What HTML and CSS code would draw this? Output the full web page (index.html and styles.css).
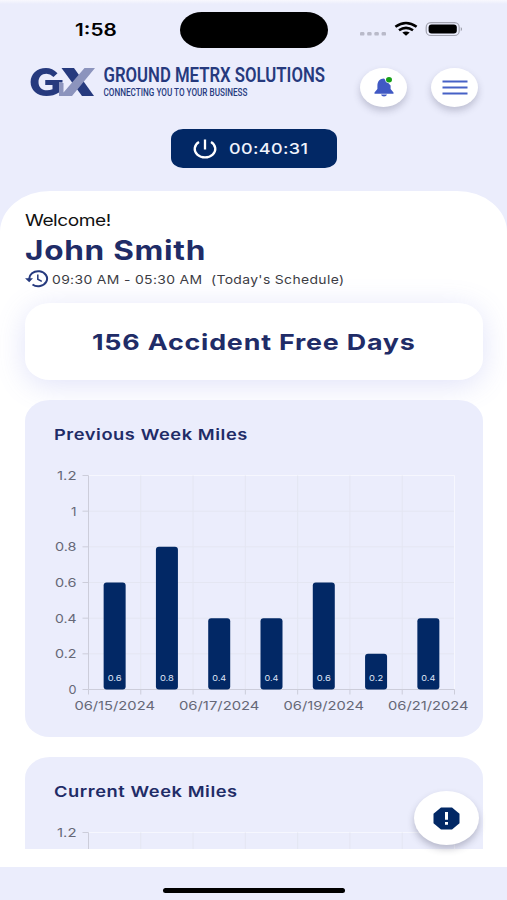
FILE: index.html
```html
<!DOCTYPE html>
<html lang="en">

<head>
  <meta charset="UTF-8">
  <meta name="viewport" content="width=device-width, initial-scale=1.0">
  <title>Ground Metrx Solutions</title>
  <link rel="stylesheet" href="styles.css">
</head>

<body>

  <div class="status-bar">
    <div class="clock"><span class="wide">1:58</span></div>
    <div class="island"></div>
    <svg class="status-icons" width="106" height="18" viewBox="0 0 106 18">
      <g fill="#b9bac9">
        <rect x="1" y="12" width="4.4" height="3.6" rx="1.2" />
        <rect x="8.2" y="12" width="4.4" height="3.6" rx="1.2" />
        <rect x="15.4" y="12" width="4.4" height="3.6" rx="1.2" />
        <rect x="22.6" y="12" width="4.4" height="3.6" rx="1.2" />
      </g>
      <g fill="none" stroke="#000" stroke-width="2.6">
        <path d="M36.400 6.800Q47 -.8 57.600 6.800" />
        <path d="M40 10.300Q47 5.300 54 10.300" />
      </g>
      <path d="M43.300 12.600Q47 10.400 50.700 12.600L47 15.800Z" fill="#000" />
      <rect x="67.200" y="2.700" width="33" height="12.800" rx="4.600" fill="none" stroke="#a3a4b0" stroke-width="1.200" />
      <rect x="69.600" y="4.600" width="28.200" height="9" rx="3" fill="#000" />
      <path d="M101.800 7Q104 9.100 101.800 11.200Z" fill="#8d8e99" />
    </svg>
  </div>

  <header class="header">
    <svg class="logo" width="300" height="40" viewBox="0 -2 300 40">
      <path d="M31.500 4H44L64 32H52Z" fill="#263a7e" />
      <path d="M27.500 9.200Q22.500 4 16 4C7 4 .6 10 .6 18S7 32 16.500 32Q23.500 32 29 28.500V16H15.500V21H22.500V25.300Q20 26.300 17 26.300C11.500 26.300 8.500 23 8.500 18S11.500 9.700 16.500 9.700Q20 9.700 23.500 13Z" fill="#263a7e" />
      <path d="M15.500 16H32.500V18.500H29V21H15.500Z" fill="#263a7e" />
      <path d="M29 19H33.500V28.500L54.500 4H65L42 32H29Z" fill="#8c94bd" />
      <text class="logo-name" x="73.500" y="17.500" textLength="221.500" lengthAdjust="spacingAndGlyphs">GROUND METRX SOLUTIONS</text>
      <text class="logo-tagline" x="73.500" y="32" textLength="144" lengthAdjust="spacingAndGlyphs">CONNECTING YOU TO YOUR BUSINESS</text>
    </svg>
    <button class="round-button">
      <svg width="22" height="22" viewBox="0 0 22 22">
        <path d="M11 2.500C6.500 2.500 4.600 5.500 4.400 9.500V13L1.500 16.500V17.800H20.500V16.500L17.600 13V9.500Z" fill="#4059c4" />
        <path d="M8 18.600H14Q13.500 20.600 11 20.600T8 18.600Z" fill="#4059c4" />
        <ellipse cx="16" cy="3.800" rx="3.700" ry="3.300" fill="#fff" />
        <ellipse cx="16" cy="3.800" rx="3" ry="2.700" fill="#18a018" />
      </svg>
    </button>
    <button class="round-button">
      <svg width="26" height="15" viewBox="0 0 26 15">
        <path d="M.5 1.500H25.500M.5 7.500H25.500M.5 13.500H25.500" stroke="#4661c6" stroke-width="2" />
      </svg>
    </button>
  </header>

  <div class="timer-row">
    <button class="timer">
      <svg width="24" height="20" viewBox="0 0 24 20">
        <path d="M6 3A10.300 8.500 0 1 0 18 3M12 .5V10.500" fill="none" stroke="#fff" stroke-width="2.300" />
      </svg>
      <span class="wide">00:40:31</span>
    </button>
  </div>

  <main class="panel">
    <div class="scroll">
      <div class="welcome"><span class="wide">Welcome!</span></div>
      <h1 class="name"><span class="wide">John Smith</span></h1>
      <div class="schedule">
        <svg width="24" height="18" viewBox="0 0 24 18">
          <path d="M4.300 9.500A8.900 7.500 0 1 1 7.500 14.500" fill="none" stroke="#263a7e" stroke-width="2" />
          <path d="M0 8.200H8L4.200 12.200Z" fill="#263a7e" />
          <path d="M12.800 4.500V9.200L16.800 11.400" fill="none" stroke="#263a7e" stroke-width="1.500" />
        </svg>
        <span class="wide">09:30 AM - 05:30 AM&nbsp; (Today's Schedule)</span>
      </div>

      <section class="accident-card"><span class="wide">156 Accident Free Days</span></section>

      <section class="chart-card">
        <h2><span class="wide">Previous Week Miles</span></h2>
        <svg class="chart" id="previousWeek" width="458" height="250"></svg>
      </section>

      <section class="chart-card">
        <h2><span class="wide">Current Week Miles</span></h2>
        <svg class="chart" id="currentWeek" width="458" height="24"></svg>
      </section>
    </div>
  </main>

  <footer class="home-area">
    <div class="home-indicator"></div>
  </footer>

  <button class="alert-button">
    <svg width="27" height="23" viewBox="0 0 27 23">
      <path d="M8 .5H19L26.500 6.800V16.200L19 22.500H8L.5 16.200V6.800Z" fill="#022865" />
      <path d="M13.500 5V12.700M13.500 15V17.800" stroke="#fff" stroke-width="3" />
    </svg>
  </button>

  <script>
    const previousMiles = [
      { date: "06/15/2024", value: 0.6 },
      { date: "06/16/2024", value: 0.8 },
      { date: "06/17/2024", value: 0.4 },
      { date: "06/18/2024", value: 0.4 },
      { date: "06/19/2024", value: 0.6 },
      { date: "06/20/2024", value: 0.2 },
      { date: "06/21/2024", value: 0.4 }
    ];

    const days = 7;
    const left = 63.5, right = 429.5, top0 = 7.5, bottom = 221.5;
    const maxValue = 1.2;

    function text(x, y, width, anchor, cls, label) {
      return `<text class="${cls}" x="${x}" y="${y}" text-anchor="${anchor}" textLength="${width}" lengthAdjust="spacingAndGlyphs">${label}</text>`;
    }

    function line(x1, y1, x2, y2, cls) {
      return `<line class="${cls}" x1="${x1}" y1="${y1}" x2="${x2}" y2="${y2}" />`;
    }

    function renderChart(id, data) {
      const chart = document.getElementById(id);
      const height = Number(chart.getAttribute("height"));
      const step = (right - left) / days;
      let out = "";

      // grid and value axis, only as far down as the chart is open
      for (let i = 0; i <= 6; i++) {
        const y = bottom - (bottom - top0) * i / 6;
        if (y > height) continue;
        const label = String(+(i * 0.2).toFixed(1));
        const width = label === "1.2" ? 19.5 : label === "0" ? 8 : label === "1" ? 5.5 : 21.5;
        out += line(left, y, right, y, i === 6 ? "grid-edge" : "grid");
        out += line(left - 6, y, left, y, "axis");
        out += text(51.5, y + 4.4, width, "end", "label", label);
      }
      for (let i = 0; i <= days; i++) {
        const x = left + step * i;
        out += line(x, top0, x, bottom, i === days ? "grid-edge" : "grid");
        out += line(x, bottom, x, bottom + 5, "axis");
      }
      out += line(left, top0, left, bottom, "axis");
      out += line(left, bottom, right, bottom, "axis");

      data.forEach((d, i) => {
        const x = left + step * (i + 0.5);
        const h = (bottom - top0) * d.value / maxValue;
        out += `<rect class="bar" x="${x - 11}" y="${bottom - h}" width="22" height="${h}" rx="3" />`;
        out += text(x, bottom - 9, 14, "middle", "bar-label", d.value);
        if (i % 2 === 0) {
          out += text(x, bottom + 20.2, 80.5, "middle", "label", d.date);
        }
      });

      chart.innerHTML = out;
    }

    renderChart("previousWeek", previousMiles);
    renderChart("currentWeek", []);
  </script>

</body>

</html>
```
FILE: styles.css
```css
* {
  box-sizing: border-box;
}

body {
  margin: 0;
  height: 900px;
  display: flex;
  flex-direction: column;
  overflow: hidden;
  background: linear-gradient(#f8f8fe 0, #ebedfc 4px);
  font-family: Inter, "Liberation Sans", sans-serif;
  color: #1f2c67;
}

button {
  border: none;
  padding: 0;
  display: flex;
  align-items: center;
  justify-content: center;
  font-family: inherit;
}

h1,
h2 {
  margin: 0;
}

/* letters are drawn wider than tall all over the app */
.wide {
  display: inline-block;
  white-space: nowrap;
  transform: scaleX(1.22);
  transform-origin: left center;
}

.status-bar {
  height: 60px;
  flex: none;
  display: grid;
  grid-template-columns: 180px 148px 1fr;
  align-items: center;
}

.clock {
  padding-left: 75px;
  color: #000;
  font-size: 17px;
  font-weight: 600;
}

.island {
  height: 36px;
  border-radius: 22px / 18px;
  background: #000;
}

.status-icons {
  margin: -2px 0 0 31px;
}

.header {
  height: 54px;
  flex: none;
  display: flex;
  align-items: center;
  padding: 0 29px 0 30px;
}

.logo {
  flex: none;
  margin-top: -10px;
}

.logo-name,
.logo-tagline {
  font-family: Roboto, "Liberation Sans", sans-serif;
  fill: #263a7e;
}

.logo-name {
  font-size: 19.5px;
  font-weight: 600;
}

.logo-tagline {
  font-size: 10px;
  font-weight: 500;
}

.round-button {
  flex: none;
  width: 47px;
  height: 39px;
  border-radius: 50%;
  background: #fff;
  box-shadow: 0 4px 7px rgba(60, 60, 90, 0.25);
}

.header .logo + .round-button {
  margin-left: 30px;
}

.round-button + .round-button {
  margin-left: 24px;
}

.timer-row {
  height: 77px;
  flex: none;
  padding: 15px 0 0 171px;
}

.timer {
  width: 166px;
  height: 39px;
  border-radius: 12px / 10px;
  background: #022865;
  color: #f0f3fc;
  font-size: 15px;
  font-weight: 500;
  letter-spacing: 0.3px;
  justify-content: flex-start;
  padding-left: 22px;
  gap: 12px;
}

.timer .wide {
  transform: scaleX(1.2);
}

.panel {
  height: 676px;
  flex: none;
  background: #fff;
  border-radius: 50px 50px 0 0 / 41px 41px 0 0;
}

.scroll {
  height: 658px;
  overflow: hidden;
  padding: 18px 24px 0 25px;
}

.welcome {
  height: 23px;
  line-height: 23px;
  color: #111;
  font-size: 16.5px;
  letter-spacing: -0.4px;
}

.welcome .wide,
.schedule .wide {
  transform: scaleX(1.16);
}

.name {
  height: 36px;
  line-height: 38px;
  font-size: 27px;
  font-weight: 650;
  letter-spacing: 0.6px;
}

.name .wide {
  transform: scaleX(1.17);
}

.schedule {
  height: 22px;
  display: flex;
  align-items: center;
  gap: 3px;
  color: #3c3c44;
  font-size: 12px;
  letter-spacing: 0.3px;
}

.accident-card {
  height: 77px;
  margin-top: 13px;
  padding-left: 67px;
  line-height: 78px;
  border-radius: 25px / 21px;
  background: #fff;
  box-shadow: 0 5px 30px rgba(100, 108, 225, 0.2);
  font-size: 22px;
  font-weight: 650;
  letter-spacing: 0.65px;
}

.chart-card {
  position: relative;
  height: 337px;
  margin-top: 20px;
  padding-top: 25px;
  border-radius: 25px / 21px;
  background: #ebedfc;
}

.chart-card h2 {
  height: 20px;
  line-height: 20px;
  padding-left: 29px;
  font-size: 15px;
  font-weight: 600;
  letter-spacing: 0.45px;
}

.chart {
  display: block;
  margin-top: 23px;
}

.grid {
  stroke: #e4e6f2;
}

.grid-edge {
  stroke: #f6f7fe;
}

.axis {
  stroke: #cccdda;
}

.bar {
  fill: #022865;
}

.label {
  font-size: 12px;
  fill: #666877;
}

.bar-label {
  font-size: 8px;
  fill: #dfe4f5;
}

.home-area {
  height: 33px;
  flex: none;
  display: flex;
  justify-content: center;
  padding-top: 20px;
}

.home-indicator {
  width: 182px;
  height: 5px;
  margin-top: 1px;
  border-radius: 3px;
  background: #000;
}

/* floats over the scrolled charts */
.alert-button {
  position: absolute;
  left: 414px;
  top: 791px;
  width: 65px;
  height: 54px;
  border-radius: 50%;
  background: #fff;
  box-shadow: 0 4px 7px rgba(50, 50, 80, 0.28);
}
```
